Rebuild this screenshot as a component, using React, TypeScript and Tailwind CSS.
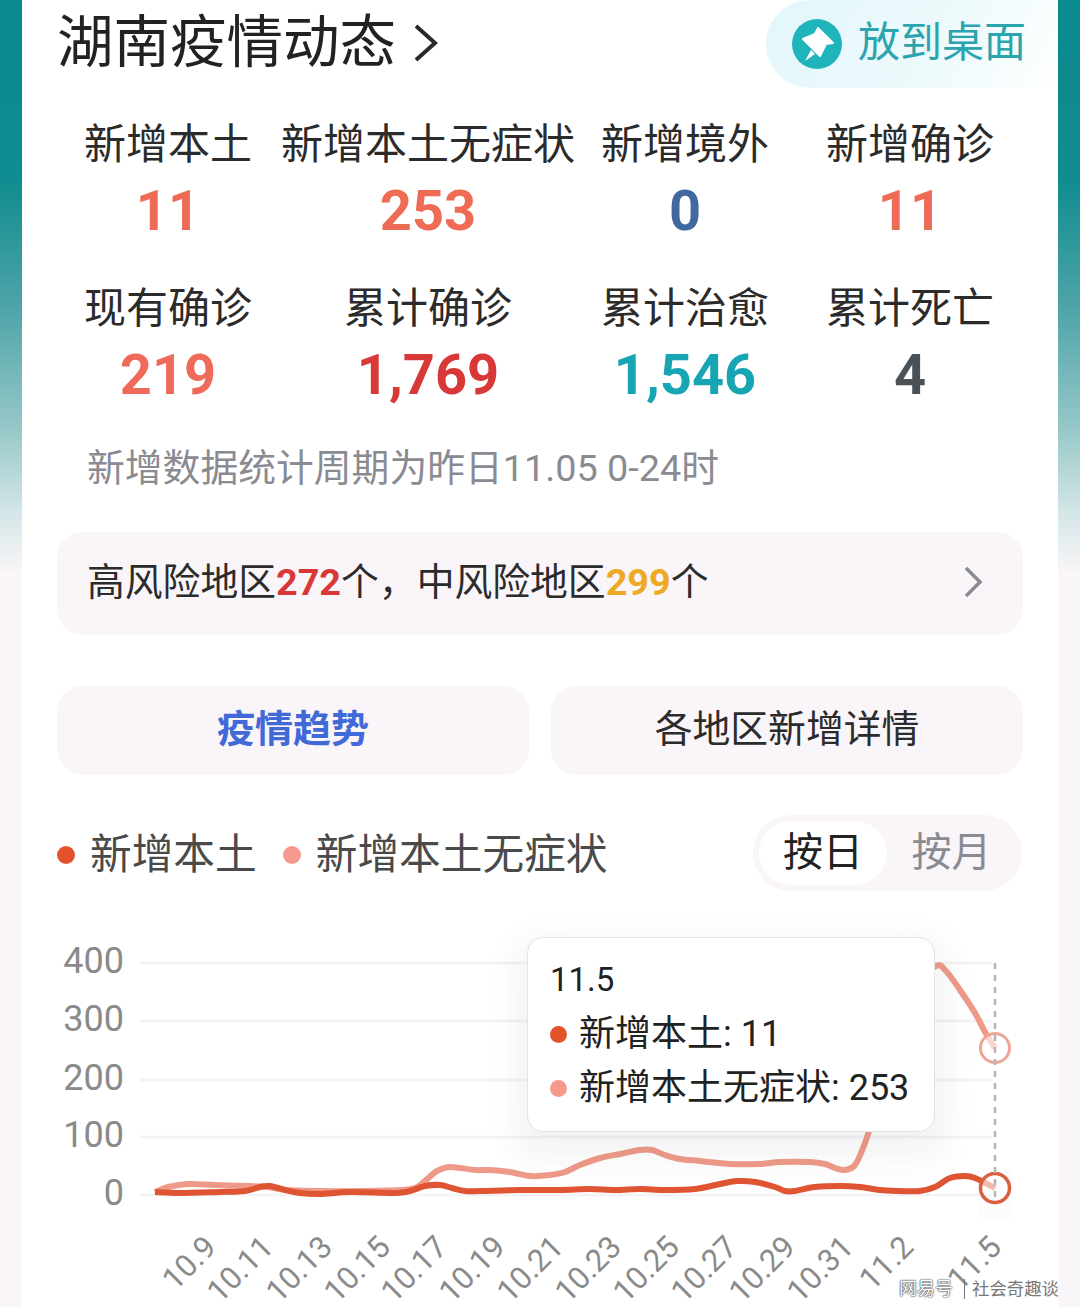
const stats = [
  [
    { label: '新增本土', value: '11', color: 'text-[#ee6b55]' },
    { label: '新增本土无症状', value: '253', color: 'text-[#ee6b55]' },
    { label: '新增境外', value: '0', color: 'text-[#41699f]' },
    { label: '新增确诊', value: '11', color: 'text-[#ee6b55]' },
  ],
  [
    { label: '现有确诊', value: '219', color: 'text-[#ee6b5a]' },
    { label: '累计确诊', value: '1,769', color: 'text-[#d93838]' },
    { label: '累计治愈', value: '1,546', color: 'text-[#17a5b3]' },
    { label: '累计死亡', value: '4', color: 'text-[#4a5157]' },
  ],
];

const gridLines = [
  { y: 963, label: '400' },
  { y: 1021, label: '300' },
  { y: 1080, label: '200' },
  { y: 1137, label: '100' },
  { y: 1195, label: '0' },
];

const xLabels = [
  { x: 218, label: '10.9' },
  { x: 275, label: '10.11' },
  { x: 334, label: '10.13' },
  { x: 392, label: '10.15' },
  { x: 449, label: '10.17' },
  { x: 507, label: '10.19' },
  { x: 565, label: '10.21' },
  { x: 623, label: '10.23' },
  { x: 681, label: '10.25' },
  { x: 739, label: '10.27' },
  { x: 797, label: '10.29' },
  { x: 855, label: '10.31' },
  { x: 915, label: '11.2' },
  { x: 1003, label: '11.5' },
];

const lightLine: [number, number][] = [
  [155, 1192], [168, 1187], [188, 1184], [215, 1185], [250, 1186], [268, 1187], [285, 1190], [320, 1191],
  [360, 1191], [400, 1190], [415, 1188], [425, 1181], [437, 1171], [450, 1167], [475, 1170], [490, 1170],
  [510, 1172], [530, 1176], [550, 1175], [565, 1172], [580, 1165], [600, 1158], [620, 1154], [640, 1150],
  [652, 1150], [665, 1155], [680, 1159], [700, 1161], [730, 1164], [760, 1164], [780, 1162], [810, 1162],
  [825, 1164], [835, 1168], [845, 1170], [855, 1165], [863, 1148], [872, 1120], [890, 1040], [915, 985],
  [936, 966], [946, 971], [960, 990], [975, 1013], [985, 1032], [995, 1048],
];

const darkLine: [number, number][] = [
  [155, 1192], [180, 1193], [220, 1192], [245, 1191], [260, 1187], [270, 1186], [285, 1190], [300, 1193],
  [320, 1194], [350, 1192], [395, 1193], [410, 1191], [425, 1186], [440, 1185], [452, 1188], [465, 1191],
  [480, 1191], [520, 1190], [560, 1190], [590, 1189], [615, 1190], [640, 1189], [665, 1190], [695, 1189],
  [720, 1184], [737, 1181], [755, 1182], [775, 1187], [785, 1191], [795, 1191], [815, 1187], [840, 1186],
  [860, 1187], [880, 1190], [900, 1191], [920, 1191], [935, 1187], [950, 1178], [965, 1176], [975, 1178], [995, 1188],
];

// catmull-rom through the points, so the lines stay smooth like the chart lib draws them
const smoothPath = (pts: [number, number][]) => {
  let d = `M${pts[0][0]} ${pts[0][1]}`;
  for (let i = 0; i < pts.length - 1; i++) {
    const p0 = pts[Math.max(i - 1, 0)];
    const p1 = pts[i];
    const p2 = pts[i + 1];
    const p3 = pts[Math.min(i + 2, pts.length - 1)];
    const c1x = p1[0] + (p2[0] - p0[0]) / 6;
    const c1y = p1[1] + (p2[1] - p0[1]) / 6;
    const c2x = p2[0] - (p3[0] - p1[0]) / 6;
    const c2y = p2[1] - (p3[1] - p1[1]) / 6;
    d += ` C${c1x.toFixed(1)} ${c1y.toFixed(1)} ${c2x.toFixed(1)} ${c2y.toFixed(1)} ${p2[0]} ${p2[1]}`;
  }
  return d;
};

function PinIcon() {
  return (
    <svg width="50" height="50" viewBox="0 0 50 50" className="shrink-0">
      <circle cx="25" cy="25" r="25" fill="#1fb3ba" />
      <path d="M26 9 L41 24 L34 25 L28 37 L11 20 L23 15 Z" fill="#fff" stroke="#fff" strokeWidth="2" strokeLinejoin="round" />
      <path d="M19 31 L13 42 L23 35 Z" fill="#fff" />
    </svg>
  );
}

function TrendChart() {
  return (
    <div className="relative mt-[39px] h-[377px]">
      <svg width="1036" height="377" viewBox="22 930 1036 377" className="block font-[Roboto,sans-serif]">
        <rect x="978" y="1168" width="34" height="50" fill="#fdfcfd" />
        {gridLines.map((g) => (
          <g key={g.label}>
            <line x1="140" x2="992" y1={g.y} y2={g.y} stroke="#f3f2f4" strokeWidth="2.5" />
            <text x="124" y={g.y + 10} textAnchor="end" fontSize="36" fill="#8a8a8a">
              {g.label}
            </text>
          </g>
        ))}
        <path d={smoothPath(lightLine)} fill="none" stroke="#ef9a88" strokeWidth="6" strokeLinejoin="round" />
        <path d={smoothPath(darkLine)} fill="none" stroke="#df5533" strokeWidth="6" strokeLinejoin="round" />
        <circle cx="995" cy="1048" r="14.5" fill="#fff" fillOpacity="0.6" stroke="#eca595" strokeWidth="3" />
        <circle cx="995" cy="1188" r="14.5" fill="#fff" fillOpacity="0.6" stroke="#d9603f" strokeWidth="3.5" />
        <line x1="995" x2="995" y1="963" y2="1200" stroke="#b5b5b8" strokeWidth="2.5" strokeDasharray="6 6" />
        {xLabels.map((l) => (
          <text
            key={l.label}
            x={l.x}
            y="1249"
            textAnchor="end"
            fontSize="31"
            fill="#8a8a8a"
            transform={`rotate(-45 ${l.x} 1249)`}
          >
            {l.label}
          </text>
        ))}
      </svg>
      <div className="absolute left-[505px] top-[7px] flex h-[195px] w-[408px] flex-col rounded-[16px] border border-[#e4e3e8] bg-white pl-[22px] pt-[19px] text-[#222] shadow-[0_14px_30px_14px_rgba(60,60,70,0.06)]">
        <div className="h-[46px] text-[33px] leading-[46px]">11.5</div>
        <div className="mt-[8px] flex h-[46px] items-center text-[36px]">
          <span className="mr-[12px] h-[17px] w-[17px] rounded-full bg-[#e4522c]" />
          新增本土: 11
        </div>
        <div className="mt-[8px] flex h-[46px] items-center text-[36px]">
          <span className="mr-[12px] h-[17px] w-[17px] rounded-full bg-[#f5998c]" />
          新增本土无症状: 253
        </div>
      </div>
    </div>
  );
}

export default function App() {
  return (
    <div className="relative h-[1307px] w-[1080px] overflow-hidden bg-[linear-gradient(to_bottom,#0b8a8d_0px,#0f8c8f_180px,#52a6aa_316px,#9bcaca_435px,#d5e6e8_514px,#f9f5f8_573px)] font-[Roboto,'Noto_Sans_CJK_SC',sans-serif]">
      <div className="mx-auto h-[1307px] w-[1036px] bg-white">
        <div className="flex h-[88px] items-center justify-between pl-[35px]">
          <div className="-mt-[3px] flex items-center text-[56.5px] leading-[84px] text-[#222]">
            湖南疫情动态
            <svg width="26" height="40" viewBox="0 0 26 40" className="ml-[17px]">
              <path d="M3 3 L22 20 L3 37" fill="none" stroke="#2a2a2a" strokeWidth="4" />
            </svg>
          </div>
          <div className="flex h-[88px] w-[292px] items-center rounded-l-[44px] bg-[linear-gradient(120deg,#e2f6fb,#eefafc_60%,#ffffff)] pl-[26px]">
            <PinIcon />
            <span className="-mt-[3px] ml-[16px] text-[42px] leading-[50px] text-[#2ba4ae]">放到桌面</span>
          </div>
        </div>

        <div className="mt-[32px] flex flex-col gap-[40px]">
          {stats.map((row, i) => (
            <div key={i} className="ml-[36px] grid grid-cols-[220px_300px_214px_236px]">
              {row.map((s) => (
                <div key={s.label} className="flex flex-col items-center">
                  <div className="h-[50px] whitespace-nowrap text-[42px] leading-[50px] text-[#2b2b2b]">{s.label}</div>
                  <div className={`mt-[8px] h-[66px] text-[56px] font-bold leading-[66px] ${s.color}`}>{s.value}</div>
                </div>
              ))}
            </div>
          ))}
        </div>

        <div className="ml-[65px] mt-[35px] h-[50px] text-[37.8px] leading-[50px] text-[#8a8b92]">
          新增数据统计周期为昨日11.05 0-24时
        </div>

        <div className="mx-[35px] mt-[39px] flex h-[103px] items-center justify-between rounded-[26px] bg-[#f9f5f8] pb-[3px] pl-[30px] pr-[40px] text-[37.8px] text-[#2b2b2b]">
          <div>
            高风险地区<span className="font-bold text-[#d93838]">272</span>个，中风险地区
            <span className="font-bold text-[#eeaa22]">299</span>个
          </div>
          <svg width="20" height="34" viewBox="0 0 20 34">
            <path d="M3 3 L17 17 L3 31" fill="none" stroke="#8a8b92" strokeWidth="3.5" />
          </svg>
        </div>

        <div className="mx-[35px] mt-[51px] flex gap-[22px]">
          <div className="flex h-[89px] flex-1 items-center justify-center rounded-[26px] bg-[#f9f5f8] pb-[3px] text-[38px] font-bold text-[#4169d8]">
            疫情趋势
          </div>
          <div className="flex h-[89px] flex-1 items-center justify-center rounded-[26px] bg-[#f9f5f8] pb-[3px] text-[37.8px] text-[#2b2b2b]">
            各地区新增详情
          </div>
        </div>

        <div className="ml-[35px] mr-[36px] mt-[40px] flex h-[76px] items-center justify-between">
          <div className="flex items-center pt-[4px] text-[41.7px] text-[#4a4a4a]">
            <span className="h-[18px] w-[18px] rounded-full bg-[#e4522c]" />
            <span className="ml-[15px]">新增本土</span>
            <span className="ml-[26px] h-[18px] w-[18px] rounded-full bg-[#f5998c]" />
            <span className="ml-[15px]">新增本土无症状</span>
          </div>
          <div className="flex h-[76px] w-[269px] items-center rounded-[38px] bg-[#f9f5f8] p-[6px] text-[40px]">
            <div className="flex h-[64px] w-[128px] items-center justify-center rounded-[32px] bg-white text-[#222]">按日</div>
            <div className="flex h-[64px] flex-1 items-center justify-center text-[#8a8b92]">按月</div>
          </div>
        </div>

        <TrendChart />
      </div>

      <div className="absolute left-[899px] top-[1276px] flex items-center whitespace-nowrap leading-[26px]">
        <span className="text-[18px] text-white [text-shadow:0_0_2px_#222,0_0_1px_#222]">网易号</span>
        <span className="ml-[11px] mr-[7px] h-[20px] w-[1px] bg-[#777]" />
        <span className="text-[17.4px] text-[#777] [text-shadow:0_0_2px_#fff]">社会奇趣谈</span>
      </div>
    </div>
  );
}
